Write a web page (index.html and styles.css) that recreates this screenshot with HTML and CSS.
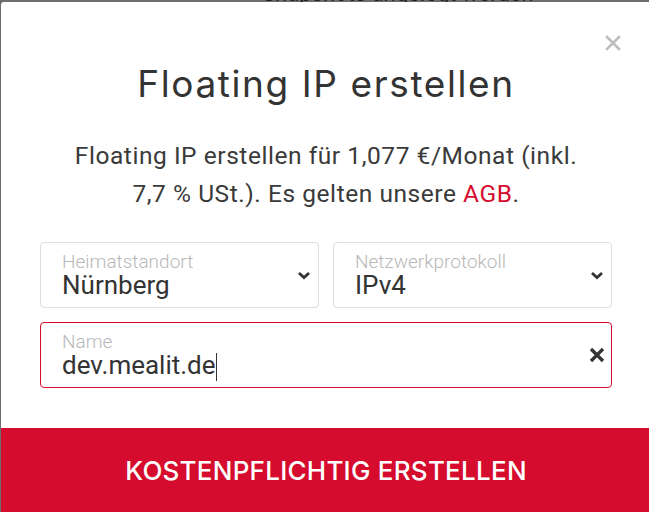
FILE: index.html
```html
<!DOCTYPE html>
<html lang="de">
<head>
  <meta charset="UTF-8">
  <title>Floating IP erstellen</title>
  <meta name="viewport" content="width=device-width, initial-scale=1.0">
  <link rel="stylesheet" href="styles.css">
</head>
<body>
  <!-- Seite hinter dem Dialog -->
  <div class="page">
    <p class="page-text">Snapshots angelegt werden</p>
  </div>

  <div class="modal">
    <button class="modal-close" aria-label="Schließen">
      <svg width="16" height="16" viewBox="0 0 16 16">
        <path d="M2 2 L14 14 M14 2 L2 14" stroke="#bdbdbd" stroke-width="2.6" stroke-linecap="square"/>
      </svg>
    </button>

    <div class="modal-body">
      <h1 class="modal-title">Floating IP erstellen</h1>
      <p class="modal-text">Floating IP erstellen für 1,077 €/Monat (inkl. 7,7 % USt.). Es gelten unsere <a href="#">AGB</a>.</p>

      <div class="form-grid">
        <div class="field">
          <div class="field-main">
            <span class="field-label">Heimatstandort</span>
            <span class="field-value">Nürnberg</span>
          </div>
          <span class="field-icon">
            <svg width="14" height="9" viewBox="0 0 14 9">
              <path d="M2 2 L7 6.5 L12 2" fill="none" stroke="#333" stroke-width="2.8"/>
            </svg>
          </span>
        </div>
        <div class="field">
          <div class="field-main">
            <span class="field-label">Netzwerkprotokoll</span>
            <span class="field-value">IPv4</span>
          </div>
          <span class="field-icon">
            <svg width="14" height="9" viewBox="0 0 14 9">
              <path d="M2 2 L7 6.5 L12 2" fill="none" stroke="#333" stroke-width="2.8"/>
            </svg>
          </span>
        </div>
        <div class="field field-wide field-active">
          <div class="field-main">
            <span class="field-label">Name</span>
            <span class="field-value">dev.mealit.de<span class="caret"></span></span>
          </div>
          <span class="field-icon">
            <svg width="16" height="16" viewBox="0 0 16 16">
              <path d="M2 2 L14 14 M14 2 L2 14" stroke="#333" stroke-width="3.2"/>
            </svg>
          </span>
        </div>
      </div>
    </div>

    <button class="submit-button">KOSTENPFLICHTIG ERSTELLEN</button>
  </div>
</body>
</html>
```

FILE: styles.css
```css
html, body {
  margin: 0; padding: 0;
  height: 100%;
  overflow: hidden;
}
body {
  background-color: #6d6d6d;
  font-family: Roboto, "Liberation Sans", sans-serif;
  color: #333;
}

/* Seite hinter dem Overlay */
.page-text {
  margin: -19px 0 0 262px;
  font-size: 22px;
  color: #1e1e1e;
  white-space: nowrap;
}

.modal {
  position: fixed;
  top: 2px;
  left: 1px;
  width: 650px;
  height: 560px;
  background-color: #fff;
  border-radius: 3px 0 0 0;
}
.modal-close {
  position: absolute;
  top: 31px;
  left: 602px;
  padding: 0;
  border: none;
  background: none;
  width: 20px;
  height: 20px;
  display: flex;
  align-items: center;
  justify-content: center;
  cursor: pointer;
}

.modal-body {
  padding: 60px 39px 40px;
  text-align: center;
}
.modal-title {
  margin: 0;
  font-family: Inter, Lato, sans-serif;
  font-weight: 400;
  font-size: 37px;
  letter-spacing: 1.6px;
  line-height: 43px;
  color: #333;
}
.modal-text {
  margin: 32px auto 29px;
  max-width: 540px;
  font-size: 24.5px;
  letter-spacing: 0.55px;
  line-height: 38px;
  color: #3a3a3a;
}
.modal-text a {
  color: #d50c2d;
  text-decoration: none;
}

.form-grid {
  display: grid;
  grid-template-columns: 1fr 1fr;
  gap: 14px;
  text-align: left;
}
.field {
  display: flex;
  align-items: center;
  border: 1px solid #ddd;
  border-radius: 4px;
  padding: 8px 4px 8px 21px;
}
.field-wide {
  grid-column: 1 / 3;
}
.field-active {
  border-color: #d50c2d;
}
.field-main {
  flex: 1;
  display: flex;
  flex-direction: column;
}
.field-label {
  font-size: 19px;
  line-height: 21px;
  font-weight: 300;
  color: #b8b8b8;
}
.field-value {
  font-size: 26px;
  line-height: 27px;
  color: #333;
}
.caret {
  display: inline-block;
  width: 1px;
  height: 28px;
  margin: 0 0 -3px 0;
  vertical-align: -4px;
  background-color: #333;
}
.field-icon {
  width: 20px;
  display: flex;
  justify-content: center;
}

.submit-button {
  display: block;
  width: 100%;
  height: 84px;
  padding: 0;
  border: none;
  cursor: pointer;
  background-color: #d50c2d;
  color: #fff;
  font-family: Inter, Lato, sans-serif;
  font-size: 26px;
  font-weight: 500;
  letter-spacing: 0.25px;
  transition: background-color 0.2s;
}
.submit-button:hover {
  background-color: #b80a26;
}
```
